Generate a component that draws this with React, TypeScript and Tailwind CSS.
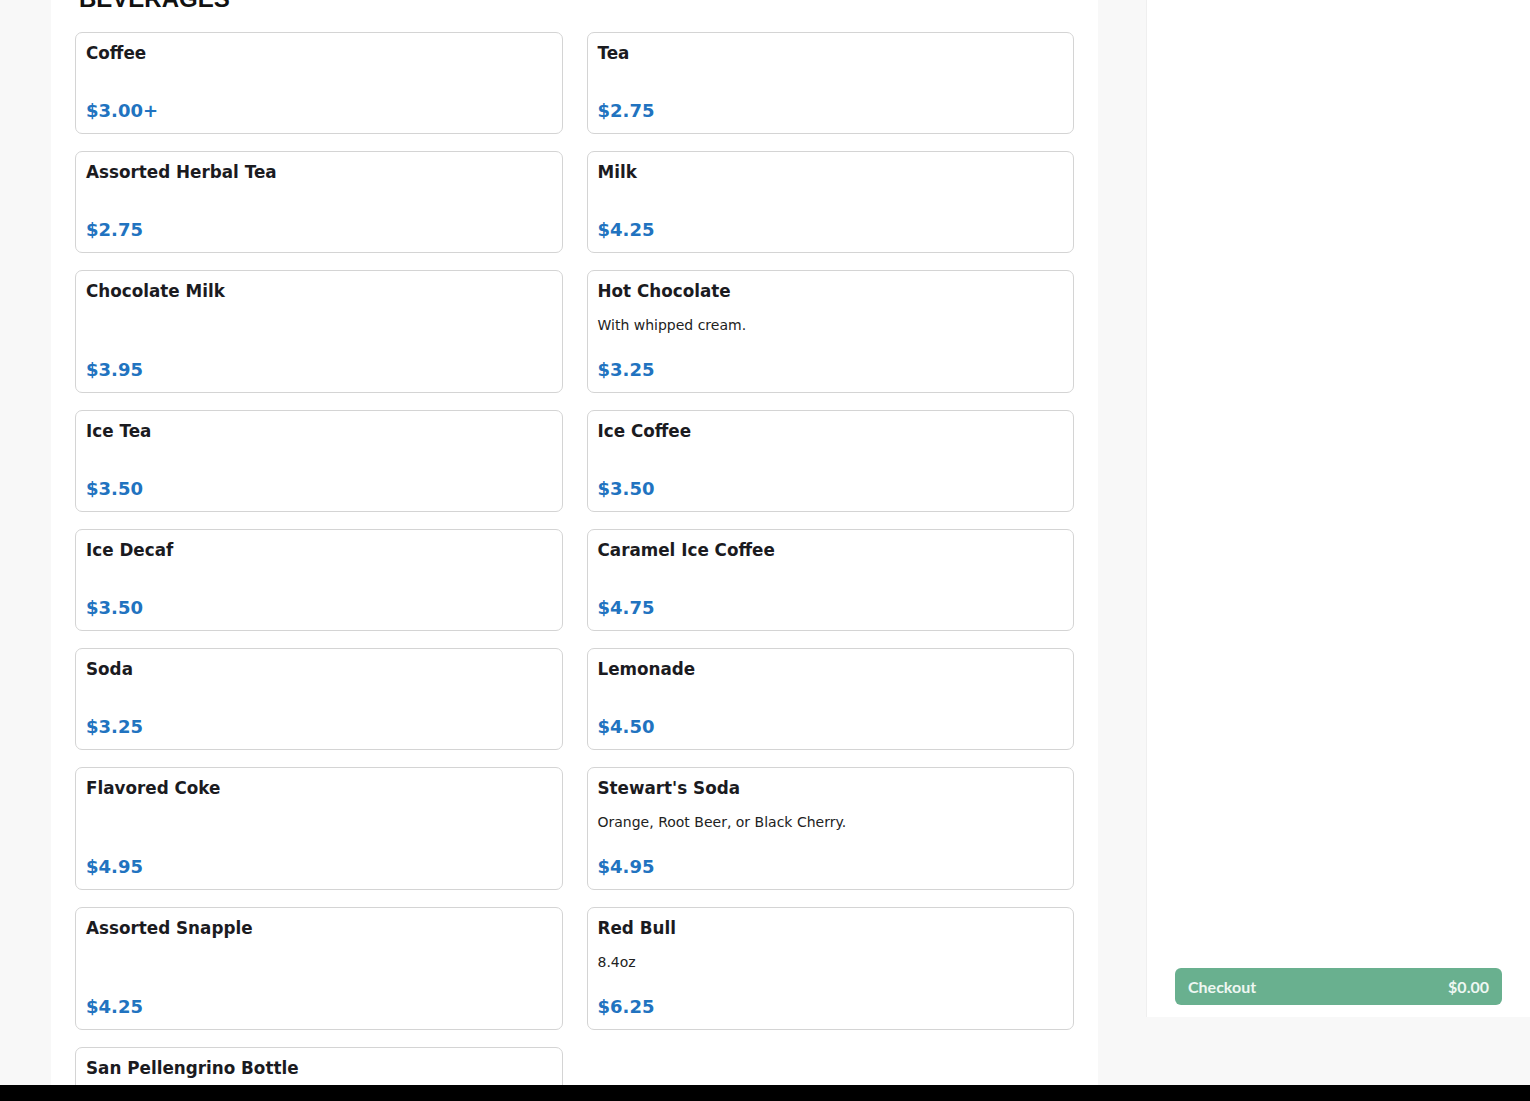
import React from 'react'

type Item = { name: string; price: string; desc?: string }

const items: Item[] = [
  { name: 'Coffee', price: '$3.00+' },
  { name: 'Tea', price: '$2.75' },
  { name: 'Assorted Herbal Tea', price: '$2.75' },
  { name: 'Milk', price: '$4.25' },
  { name: 'Chocolate Milk', price: '$3.95' },
  { name: 'Hot Chocolate', price: '$3.25', desc: 'With whipped cream.' },
  { name: 'Ice Tea', price: '$3.50' },
  { name: 'Ice Coffee', price: '$3.50' },
  { name: 'Ice Decaf', price: '$3.50' },
  { name: 'Caramel Ice Coffee', price: '$4.75' },
  { name: 'Soda', price: '$3.25' },
  { name: 'Lemonade', price: '$4.50' },
  { name: 'Flavored Coke', price: '$4.95' },
  { name: "Stewart's Soda", price: '$4.95', desc: 'Orange, Root Beer, or Black Cherry.' },
  { name: 'Assorted Snapple', price: '$4.25' },
  { name: 'Red Bull', price: '$6.25', desc: '8.4oz' },
  { name: 'San Pellengrino Bottle', price: '$3.50' },
]

function MenuCard({ item }: { item: Item }) {
  return (
    <div className="flex flex-col min-h-[102px] bg-white border border-[#d4d4d4] rounded-[7px] px-[10px] pt-[9px] pb-[10px]">
      <h3 className="text-[16.8px] leading-[22px] font-bold text-[#1b1b1f]">{item.name}</h3>
      {item.desc && (
        <p className="mt-[13px] text-[14px] leading-[20px] text-[#222]">{item.desc}</p>
      )}
      <div className="mt-auto pt-[23px] text-[18px] leading-[24px] font-bold text-[#2173c0]">{item.price}</div>
    </div>
  )
}

export default function App() {
  return (
    <div className="h-[1101px] overflow-hidden flex flex-col bg-[#f8f8f8] [font-family:'DejaVu_Sans',sans-serif]">
      <div className="flex flex-1 min-h-0">
        {/* Menu */}
        <div className="ml-[51px] w-[1047px] bg-white overflow-hidden px-[24px]">
          <div className="-mt-[17px]">
            <h2 className="pl-[4px] text-[24px] leading-[32px] font-bold text-[#111] [font-family:'Liberation_Sans',Arial,sans-serif]">
              BEVERAGES
            </h2>
            <div className="mt-[17px] grid grid-cols-2 gap-x-[24px] gap-y-[17px]">
              {items.map((item) => (
                <MenuCard key={item.name} item={item} />
              ))}
            </div>
          </div>
        </div>

        {/* Cart sidebar */}
        <div className="ml-[48px] w-[384px] h-[1017px] bg-white border-l border-[#efefef] flex flex-col justify-end px-[28px] pb-[12px]">
          <button className="flex items-center justify-between h-[37px] rounded-[6px] bg-[#69b08f] px-[13px] text-[16px] font-bold text-[#eef7f2] [font-family:Lato,sans-serif]">
            <span>Checkout</span>
            <span>$0.00</span>
          </button>
        </div>
      </div>
      <div className="h-[16px] bg-black" />
    </div>
  )
}
